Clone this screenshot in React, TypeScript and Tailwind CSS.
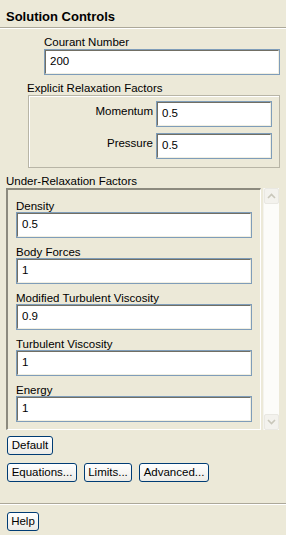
import React from "react"

const font = { fontFamily: '"Liberation Sans", Arial, sans-serif' }

function Field({ value, className = "" }: { value: string; className?: string }) {
  return (
    <div className={`h-[26px] border border-[#7F9DB9] bg-white ${className}`}>
      <div className="h-full border-t border-l border-t-[#716F64] border-l-[#716F64] border-b border-r border-b-[#F1EFE2] border-r-[#F1EFE2] pl-[4px] flex items-center text-[11.5px] text-black">
        {value}
      </div>
    </div>
  )
}

function XpButton({ label, w }: { label: string; w: string }) {
  return (
    <button
      className={`${w} h-[19px] rounded-[3px] border border-[#003C74] bg-gradient-to-b from-white to-[#ECEBE6] text-[11.5px] leading-none text-black flex items-center justify-center`}
    >
      {label}
    </button>
  )
}

function Separator() {
  return <div className="h-[2px] border-t border-[#ACA899] border-b border-b-white" />
}

function ScrollBar() {
  return (
    <div className="w-[16px] flex flex-col bg-[#FCFCF9] border-l border-[#F4F3EE]">
      <div className="h-[16px] rounded-[2px] border border-[#E9E8E2] bg-[#F3F2ED] flex items-center justify-center">
        <svg width="9" height="6" viewBox="0 0 9 6">
          <path d="M1 5 L4.5 1.5 L8 5" stroke="#C9C7BA" strokeWidth="1.6" fill="none" />
        </svg>
      </div>
      <div className="flex-1" />
      <div className="h-[16px] rounded-[2px] border border-[#E9E8E2] bg-[#F3F2ED] flex items-center justify-center">
        <svg width="9" height="6" viewBox="0 0 9 6">
          <path d="M1 1 L4.5 4.5 L8 1" stroke="#C9C7BA" strokeWidth="1.6" fill="none" />
        </svg>
      </div>
    </div>
  )
}

const factors = [
  { label: "Density", value: "0.5" },
  { label: "Body Forces", value: "1" },
  { label: "Modified Turbulent Viscosity", value: "0.9" },
  { label: "Turbulent Viscosity", value: "1" },
  { label: "Energy", value: "1" },
]

export default function App() {
  return (
    <div className="w-[286px] h-[535px] bg-[#ECE9D8] text-black text-[11.5px] overflow-hidden" style={font}>
      {/* title */}
      <div className="h-[27px] pl-[6px] pt-[9px] text-[13px] font-bold leading-[15px]">Solution Controls</div>
      <Separator />

      {/* courant */}
      <div className="pl-[44px] pr-[6px] pt-[7px]">
        <div className="leading-[13px]">Courant Number</div>
        <Field value="200" className="w-[236px]" />
      </div>

      {/* explicit relaxation */}
      <div className="pl-[27px] pt-[7px] leading-[13px]">Explicit Relaxation Factors</div>
      <div className="ml-[28px] w-[252px] h-[73px] border border-[#B8B5A6] shadow-[inset_1px_1px_0_#fff] pt-[5px] flex flex-col gap-[6px]">
        <div className="flex items-start justify-end pr-[7px] gap-[3px]">
          <span className="pt-[2px]">Momentum</span>
          <Field value="0.5" className="w-[116px]" />
        </div>
        <div className="flex items-start justify-end pr-[7px] gap-[3px]">
          <span className="pt-[2px]">Pressure</span>
          <Field value="0.5" className="w-[116px]" />
        </div>
      </div>

      {/* under-relaxation */}
      <div className="pl-[6px] pt-[6px] leading-[14px]">Under-Relaxation Factors</div>
      <div className="flex px-[6px] gap-[2px] h-[242px]">
        <div className="w-[255px] border-t-2 border-l-2 border-t-[#8C8A7E] border-l-[#8C8A7E] border-b border-r border-b-white border-r-white pl-[8px] pr-[8px] pt-[10px] flex flex-col gap-[8px]">
          {factors.map((f) => (
            <div key={f.label}>
              <div className="leading-[12px]">{f.label}</div>
              <Field value={f.value} />
            </div>
          ))}
        </div>
        <ScrollBar />
      </div>

      {/* buttons */}
      <div className="pl-[7px] pt-[6px] flex flex-col gap-[8px]">
        <XpButton label="Default" w="w-[46px]" />
        <div className="flex gap-[7px]">
          <XpButton label="Equations..." w="w-[70px]" />
          <XpButton label="Limits..." w="w-[48px]" />
          <XpButton label="Advanced..." w="w-[70px]" />
        </div>
      </div>
      <div className="mt-[21px]">
        <Separator />
      </div>
      <div className="pl-[7px] pt-[7px]">
        <XpButton label="Help" w="w-[32px]" />
      </div>
    </div>
  )
}
